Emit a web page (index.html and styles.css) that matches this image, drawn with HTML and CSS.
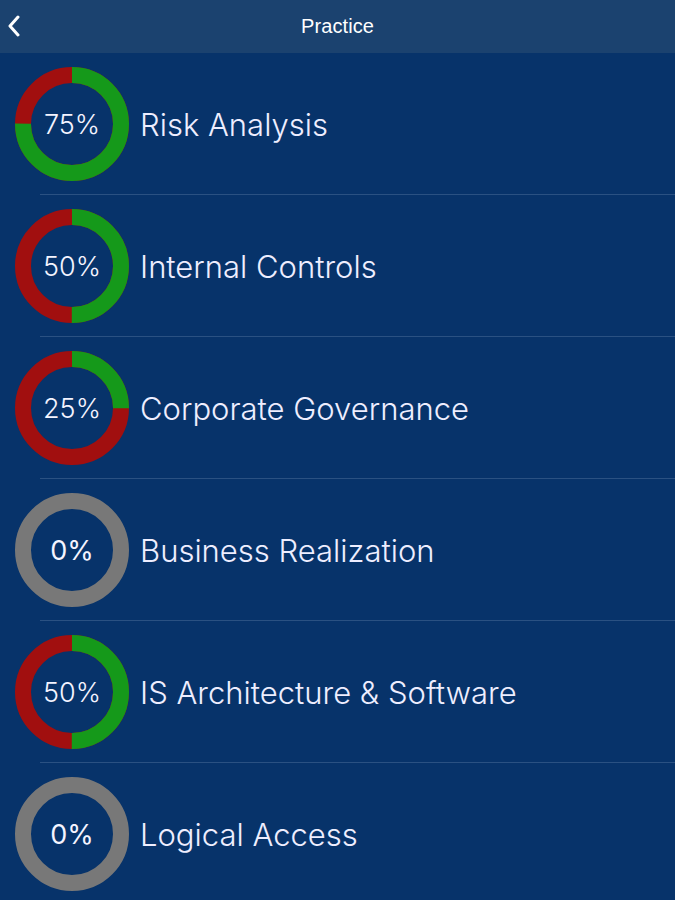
FILE: index.html
```html
<!DOCTYPE html>
<html>
<head>
<meta charset="utf-8">
<link rel="stylesheet" href="styles.css">
</head>
<body>
<header class="nav">
  <svg class="back" width="14" height="22" viewBox="0 0 14 22"><polyline points="11,2 3,11 11,20" fill="none" stroke="#fff" stroke-width="3" stroke-linecap="round" stroke-linejoin="round"/></svg>
  <h1 class="title">Practice</h1>
</header>
<ul class="list">
  <li class="row">
    <div class="ring">
      <svg width="114" height="114" viewBox="0 0 114 114"><g transform="rotate(-90 57 57)"><circle cx="57" cy="57" r="49" class="red"/><circle cx="57" cy="57" r="49" class="green" stroke-dasharray="230.9 400"/></g></svg>
      <span class="pct">75%</span>
    </div>
    <span class="label">Risk Analysis</span>
  </li>
  <li class="row">
    <div class="ring">
      <svg width="114" height="114" viewBox="0 0 114 114"><g transform="rotate(-90 57 57)"><circle cx="57" cy="57" r="49" class="red"/><circle cx="57" cy="57" r="49" class="green" stroke-dasharray="153.9 400"/></g></svg>
      <span class="pct">50%</span>
    </div>
    <span class="label">Internal Controls</span>
  </li>
  <li class="row">
    <div class="ring">
      <svg width="114" height="114" viewBox="0 0 114 114"><g transform="rotate(-90 57 57)"><circle cx="57" cy="57" r="49" class="red"/><circle cx="57" cy="57" r="49" class="green" stroke-dasharray="77 400"/></g></svg>
      <span class="pct">25%</span>
    </div>
    <span class="label">Corporate Governance</span>
  </li>
  <li class="row">
    <div class="ring">
      <svg width="114" height="114" viewBox="0 0 114 114"><circle cx="57" cy="57" r="49" class="gray"/></svg>
      <span class="pct zero">0%</span>
    </div>
    <span class="label">Business Realization</span>
  </li>
  <li class="row">
    <div class="ring">
      <svg width="114" height="114" viewBox="0 0 114 114"><g transform="rotate(-90 57 57)"><circle cx="57" cy="57" r="49" class="red"/><circle cx="57" cy="57" r="49" class="green" stroke-dasharray="153.9 400"/></g></svg>
      <span class="pct">50%</span>
    </div>
    <span class="label">IS Architecture &amp; Software</span>
  </li>
  <li class="row">
    <div class="ring">
      <svg width="114" height="114" viewBox="0 0 114 114"><circle cx="57" cy="57" r="49" class="gray"/></svg>
      <span class="pct zero">0%</span>
    </div>
    <span class="label">Logical Access</span>
  </li>
</ul>
</body>
</html>
```

FILE: styles.css
```css
html, body {
  margin: 0;
  padding: 0;
  background: #07336a;
  height: 100%;
  overflow: hidden;
}
body {
  font-family: "Liberation Sans", Arial, sans-serif;
  color: #f0f0ff;
}
.nav {
  height: 53px;
  background: #1b426f;
  display: flex;
  align-items: center;
  justify-content: center;
  position: relative;
}
.back {
  position: absolute;
  left: 7px;
  top: 15px;
}
.title {
  margin: 0;
  font-size: 20px;
  font-weight: normal;
  color: #fff;
  letter-spacing: 0.1px;
}
.list {
  list-style: none;
  margin: 0;
  padding: 0;
}
.row {
  height: 142px;
  display: flex;
  align-items: center;
  padding-left: 15px;
  box-sizing: border-box;
  background: linear-gradient(#2a5182, #2a5182) no-repeat 40px 100% / calc(100% - 40px) 1px;
}
.ring {
  width: 114px;
  height: 114px;
  display: grid;
  place-items: center;
  flex: none;
}
.ring svg, .ring .pct {
  grid-area: 1 / 1;
}
.ring circle {
  fill: none;
  stroke-width: 16;
}
.ring .red { stroke: #a10f0f; }
.ring .green { stroke: #15991a; }
.ring .gray { stroke: #787878; }
.pct {
  font-family: "Inter", "Liberation Sans", sans-serif;
  font-weight: 300;
  font-size: 27px;
  letter-spacing: 0;
  color: #f4f4ff;
}
.pct.zero {
  font-weight: 400;
}
.label {
  margin-left: 11px;
  font-family: "Inter", "Liberation Sans", sans-serif;
  font-weight: 300;
  font-size: 31px;
  letter-spacing: 0;
  color: #eeeeff;
}
```
